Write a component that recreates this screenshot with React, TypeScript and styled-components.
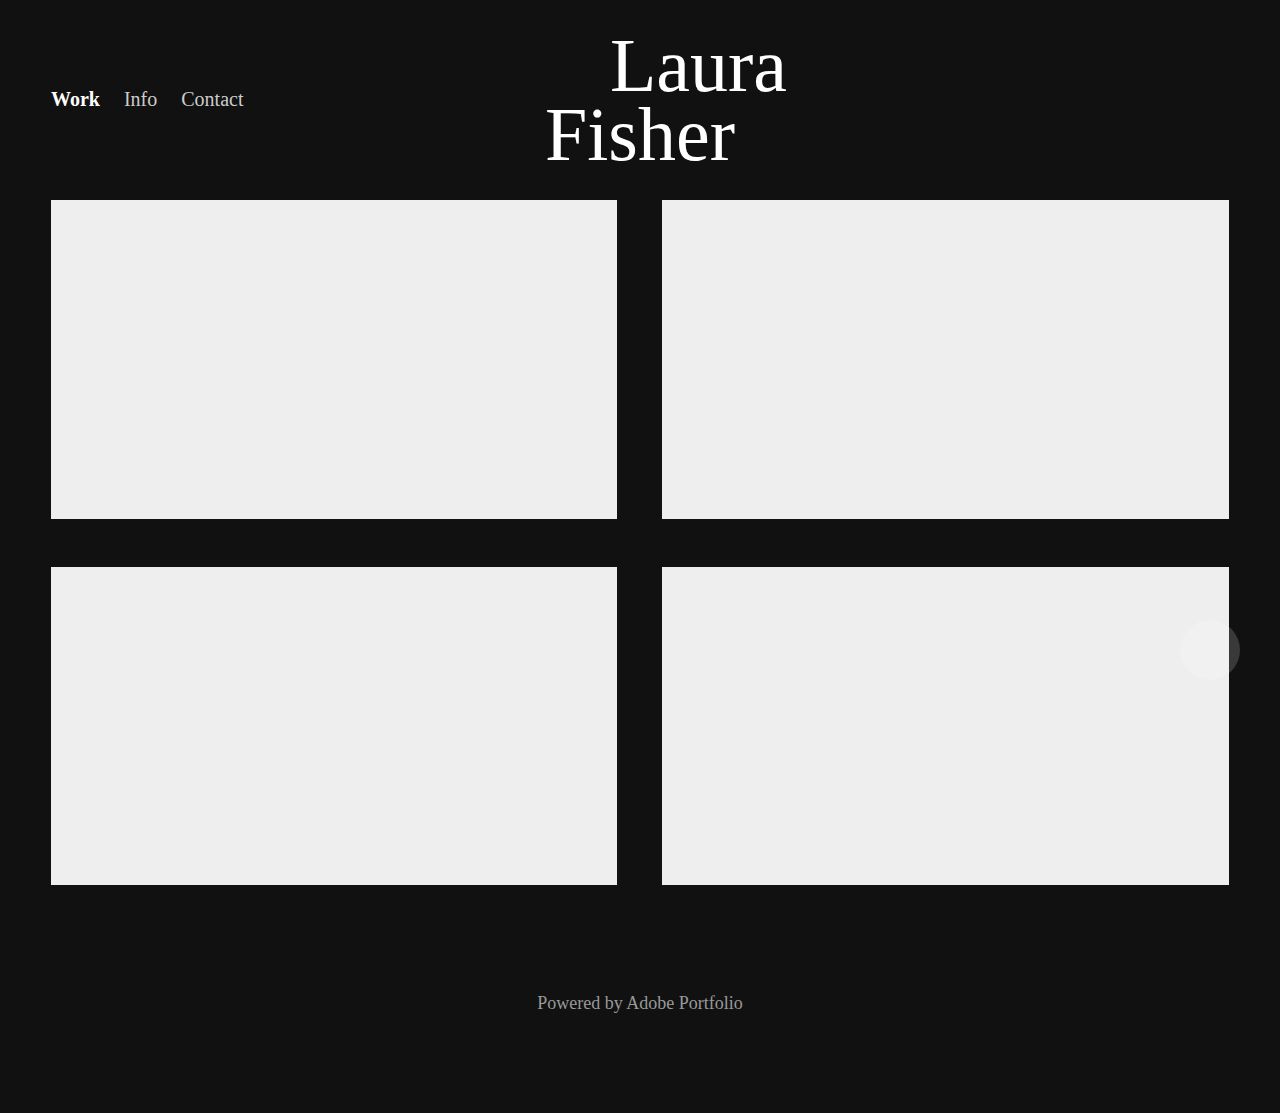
import React from "react";
import styled, { createGlobalStyle } from "styled-components";

const GlobalStyle = createGlobalStyle`
  html, body {
    margin: 0;
    padding: 0;
    background: #111111;
  }
  body {
    font-family: "Liberation Serif", "Times New Roman", serif;
    min-height: 1113px;
  }
  * { box-sizing: border-box; }
`;

const Page = styled.div`
  min-height: 1113px;
  background: #111111;
  padding: 0 51px;
  display: flex;
  flex-direction: column;
`;

const Header = styled.header`
  display: grid;
  grid-template-columns: 1fr auto 1fr;
  align-items: start;
  padding: 31px 0 31px;
`;

const Nav = styled.nav`
  display: flex;
  gap: 24px;
  margin-top: 57px;
`;

const NavLink = styled.a<{ $active?: boolean }>`
  font-size: 20px;
  line-height: 23px;
  font-weight: ${(p) => (p.$active ? 700 : 400)};
  color: ${(p) => (p.$active ? "#ffffff" : "#cccccc")};
  text-decoration: none;
  cursor: pointer;
`;

const Title = styled.h1`
  margin: 0;
  font-weight: 400;
  font-size: 76px;
  line-height: 69px;
  color: #ffffff;
  text-align: center;
`;

const TitleLine = styled.span<{ $shift?: number }>`
  display: block;
  padding-left: ${(p) => p.$shift ?? 0}px;
`;

const Grid = styled.main`
  display: grid;
  grid-template-columns: 566px 1fr;
  column-gap: 45px;
  row-gap: 48px;
`;

const Card = styled.a`
  display: block;
  background: #eeeeee;
  height: 318.5px;
`;

const Footer = styled.footer`
  padding: 108px 0 99px;
  text-align: center;
  font-size: 18px;
  line-height: 21px;
  color: #999999;
`;

const FloatingCircle = styled.div`
  position: fixed;
  left: 1180px;
  top: 620px;
  width: 60px;
  height: 60px;
  border-radius: 50%;
  background: rgba(255, 255, 255, 0.17);
`;

export default function App() {
  return (
    <>
      <GlobalStyle />
      <Page>
        <Header>
          <Nav>
            <NavLink $active>Work</NavLink>
            <NavLink>Info</NavLink>
            <NavLink>Contact</NavLink>
          </Nav>
          <Title>
            <TitleLine $shift={117}>Laura</TitleLine>
            <TitleLine>Fisher</TitleLine>
          </Title>
          <div />
        </Header>
        <Grid>
          <Card />
          <Card />
          <Card />
          <Card />
        </Grid>
        <Footer>Powered by Adobe Portfolio</Footer>
      </Page>
      <FloatingCircle />
    </>
  );
}
